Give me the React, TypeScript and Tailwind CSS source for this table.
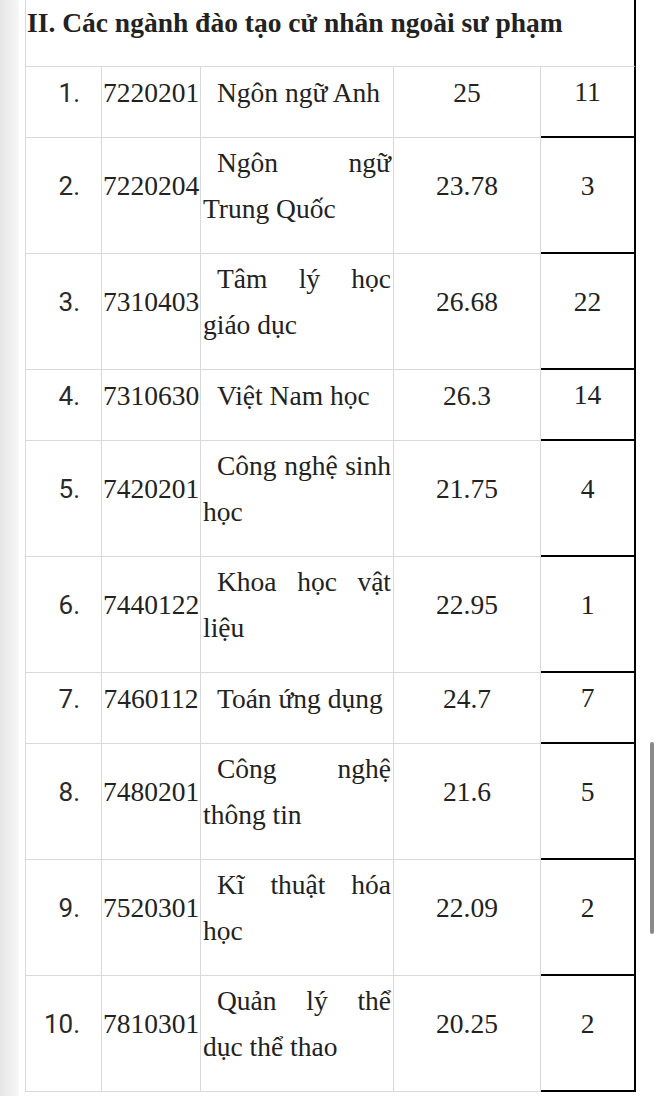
import React from "react";

type Row = { n: string; code: string; name: string; score: string; count: string };

const rows: Row[] = [
  { n: "1.", code: "7220201", name: "Ngôn ngữ Anh", score: "25", count: "11" },
  { n: "2.", code: "7220204", name: "Ngôn ngữ Trung Quốc", score: "23.78", count: "3" },
  { n: "3.", code: "7310403", name: "Tâm lý học giáo dục", score: "26.68", count: "22" },
  { n: "4.", code: "7310630", name: "Việt Nam học", score: "26.3", count: "14" },
  { n: "5.", code: "7420201", name: "Công nghệ sinh học", score: "21.75", count: "4" },
  { n: "6.", code: "7440122", name: "Khoa học vật liệu", score: "22.95", count: "1" },
  { n: "7.", code: "7460112", name: "Toán ứng dụng", score: "24.7", count: "7" },
  { n: "8.", code: "7480201", name: "Công nghệ thông tin", score: "21.6", count: "5" },
  { n: "9.", code: "7520301", name: "Kĩ thuật hóa học", score: "22.09", count: "2" },
  { n: "10.", code: "7810301", name: "Quản lý thể dục thể thao", score: "20.25", count: "2" },
];

const serif = "font-['Liberation_Serif','Times_New_Roman',serif]";
const cell = "flex items-center border-r border-b border-[#d9d9d9] pt-[2px] pb-[1px]";

export default function App() {
  return (
    <div className={`relative flex w-[660px] h-[1096px] overflow-hidden bg-white text-[#222] ${serif}`}>
      <div className="w-[19px] shrink-0 bg-linear-to-r from-[#e6e6e6] to-[#f7f7f7]" />
      <div className="ml-[6px] flex w-[611px] flex-col">
        <div className="flex border-l border-b border-r-2 border-l-[#d9d9d9] border-b-[#d9d9d9] border-r-black">
          <p className="mb-[20px] pl-[1px] text-[27.5px] font-bold leading-[46px] whitespace-nowrap">
            II. Các ngành đào tạo cử nhân ngoài sư phạm
          </p>
        </div>
        {rows.map((r) => (
          <div
            key={r.n}
            className="grid grid-cols-[76px_99px_193px_147px_95px] border-l border-l-[#d9d9d9] text-[27.5px]"
          >
            <div className={cell}>
              <p className="mb-[20px] w-full pr-[21px] text-right font-['Roboto',sans-serif] text-[26px] leading-[46px] text-[#2a2a2a]">
                {r.n}
              </p>
            </div>
            <div className={cell}>
              <p className="mb-[20px] w-full text-center leading-[46px] whitespace-nowrap">{r.code}</p>
            </div>
            <div className={cell}>
              <p className="mb-[20px] w-full pl-[2px] pr-[2px] indent-[14px] text-justify leading-[46px]">
                {r.name}
              </p>
            </div>
            <div className={cell}>
              <p className="mb-[20px] w-full text-center leading-[46px]">{r.score}</p>
            </div>
            <div className="flex items-center border-r-2 border-b-2 border-black pt-[2px] pb-[1px]">
              <p className="mb-[20px] w-full text-center leading-[46px]">{r.count}</p>
            </div>
          </div>
        ))}
      </div>
      <div className="absolute left-[650px] top-[742px] h-[192px] w-[4px] rounded-full bg-[#8a8a8a]" />
    </div>
  );
}
